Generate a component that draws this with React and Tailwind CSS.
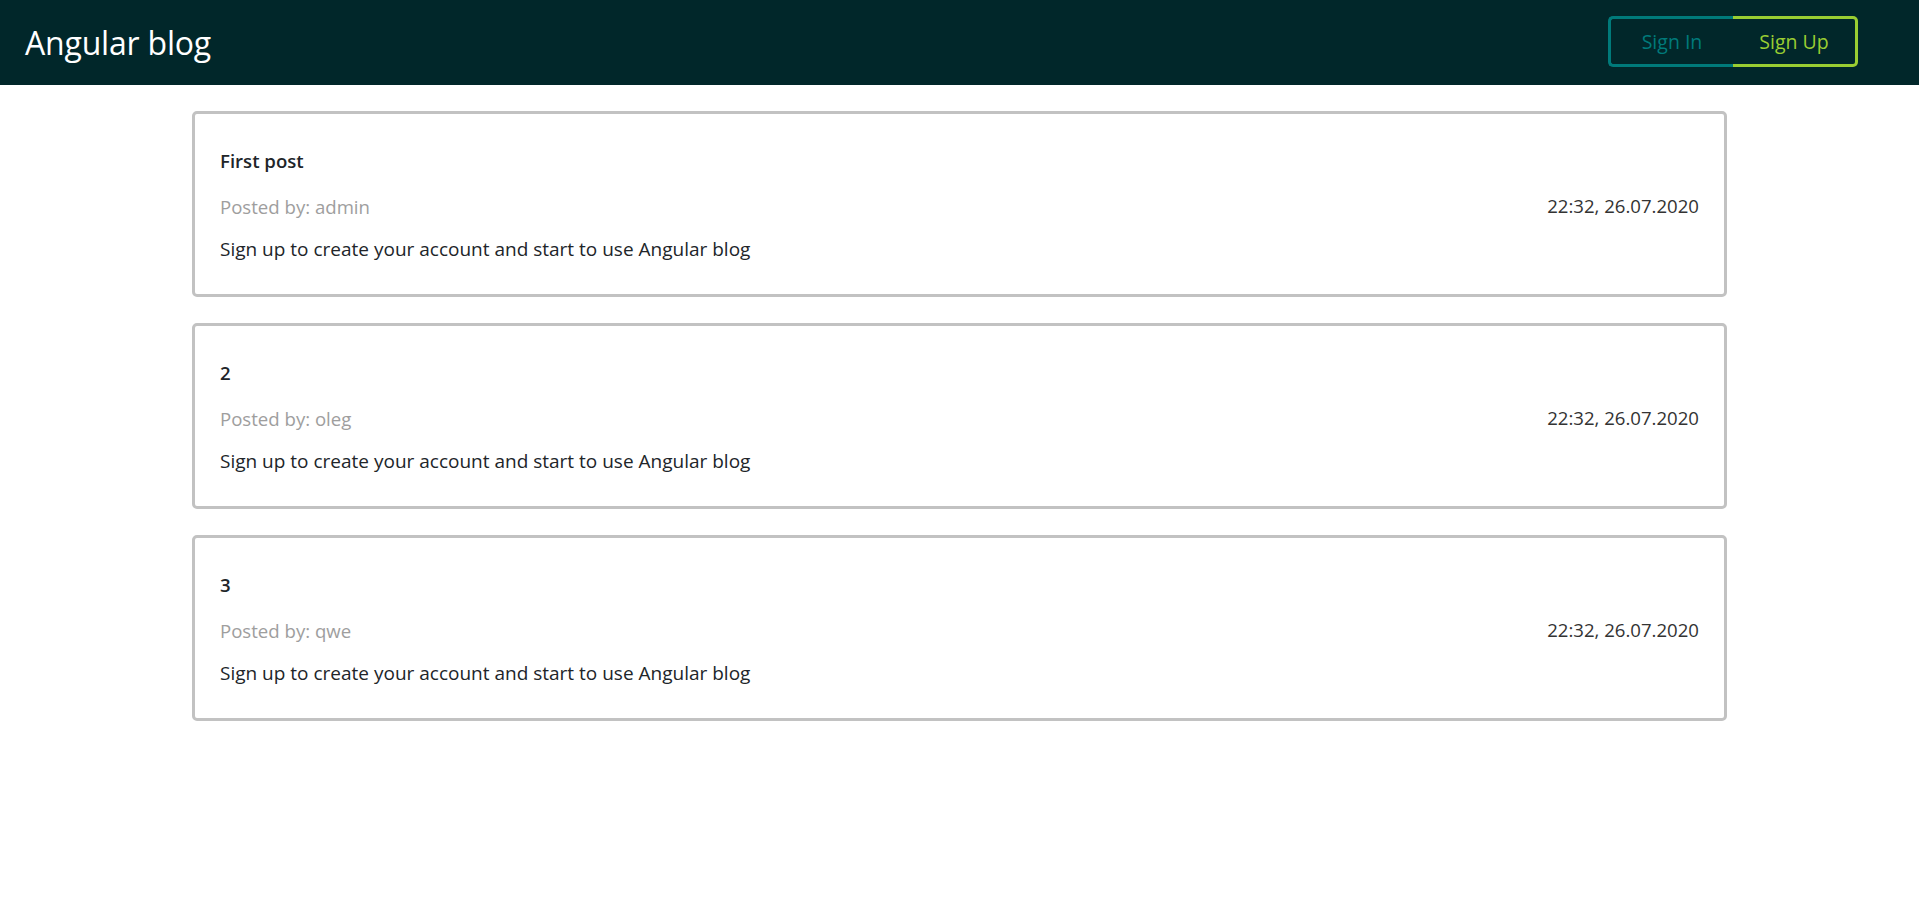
const posts = [
  { id: 1, title: "First post", author: "admin", date: "22:32, 26.07.2020" },
  { id: 2, title: "2", author: "oleg", date: "22:32, 26.07.2020" },
  { id: 3, title: "3", author: "qwe", date: "22:32, 26.07.2020" },
];

function Header() {
  return (
    <header className="h-[85px] bg-[#01272a] flex items-center justify-between pl-[25px] pr-[61px]">
      <a href="#" className="text-white text-[32px] leading-none tracking-[-0.2px]">
        Angular blog
      </a>
      <div className="flex h-[51px] -mt-[2px]">
        <button
          type="button"
          className="w-[125px] h-full border-[3px] border-r-0 border-[#007a7a] rounded-l-[5px] text-[#007a7a] text-[19.5px]"
        >
          Sign In
        </button>
        <button
          type="button"
          className="w-[125px] h-full border-[3px] border-l-0 border-[#9acd32] rounded-r-[5px] text-[#9acd32] text-[19.5px]"
        >
          Sign Up
        </button>
      </div>
    </header>
  );
}

function PostCard({ post }) {
  return (
    <div className="flex items-center justify-between border-[3px] border-[#c2c2c2] rounded-[5px] px-[25px] pt-[34px] pb-[31px]">
      <div className="flex flex-col text-[18.6px] leading-[27px]">
        <h3 className="-mt-px font-semibold text-[#212529]">{post.title}</h3>
        <p className="mt-[19px] text-[#9e9e9e]">Posted by: {post.author}</p>
        <p className="mt-[16px] text-[19px] text-[#212529]">
          Sign up to create your account and start to use Angular blog
        </p>
      </div>
      <span className="text-[18.6px] leading-[27px] text-[#333]">{post.date}</span>
    </div>
  );
}

export default function App() {
  return (
    <div className="min-h-screen bg-white font-['Open_Sans',sans-serif]">
      <Header />
      <main className="w-[1535px] mx-auto mt-[26px] flex flex-col gap-[26px]">
        {posts.map((p) => (
          <PostCard key={p.id} post={p} />
        ))}
      </main>
    </div>
  );
}
